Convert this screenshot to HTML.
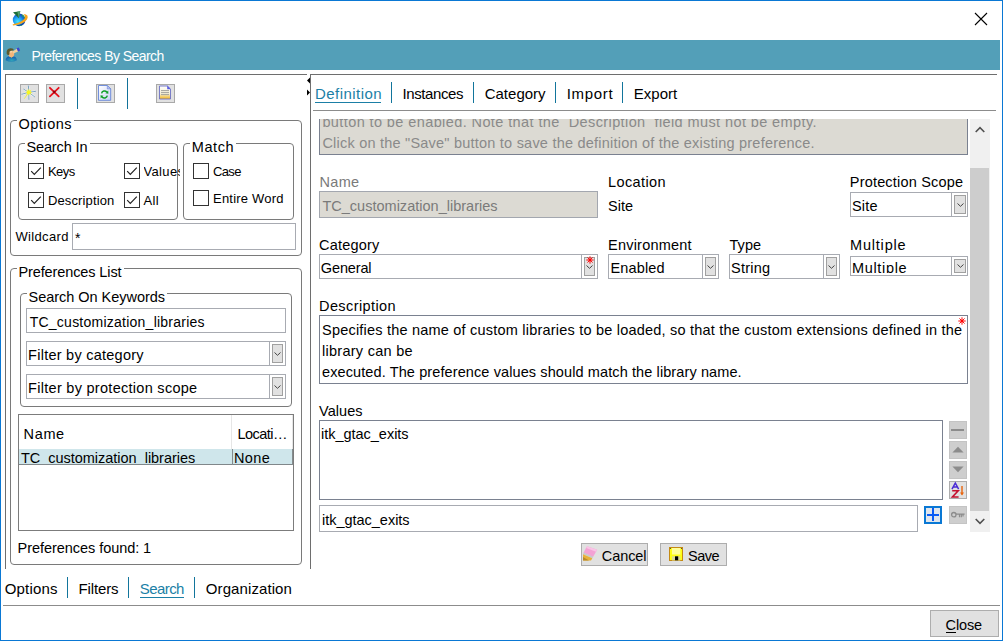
<!DOCTYPE html>
<html lang="en"><head><meta charset="utf-8"><title>Options</title>
<style>
html,body{margin:0;padding:0}
body{width:1003px;height:641px;overflow:hidden;position:relative;background:#fff;font-family:"Liberation Sans",sans-serif}
.b{position:absolute;box-sizing:border-box}
.t{position:absolute;white-space:pre;line-height:normal;font-family:"Liberation Sans",sans-serif}
.clip{position:absolute;overflow:hidden}
.fs{border:1px solid #7a7a7a;border-radius:4px}
.in{border:1px solid #a8abb2;background:#fff}
.cb{border:1px solid #333;background:#fff}
.ab{border:1px solid #a0a0a0;background:#e1e1e1}
.btn{border:1px solid #adadad;background:#e1e1e1}
.tb{border:1px solid #a9a9a9;background:#e1e1e1}
svg{position:absolute;overflow:visible}

</style></head>
<body>
<div class="b " style="left:0px;top:0px;width:1003px;height:641px;border:1px solid #0a78d4"></div>
<div class="b " style="left:3px;top:40px;width:997px;height:30px;background:#539fb8"></div>
<div class="b " style="left:5px;top:74px;width:302px;height:1px;background:#6e6e6e"></div>
<div class="b " style="left:5px;top:74px;width:1px;height:495px;background:#6e6e6e"></div>
<div class="b " style="left:310px;top:74px;width:1px;height:495px;background:#6e6e6e"></div>
<div class="b " style="left:310px;top:74px;width:687px;height:1px;background:#6e6e6e"></div>
<div class="b tb" style="left:20px;top:84px;width:19px;height:19px;"></div>
<div class="b tb" style="left:46px;top:84px;width:19px;height:19px;"></div>
<div class="b tb" style="left:96px;top:84px;width:19px;height:19px;"></div>
<div class="b tb" style="left:156px;top:84px;width:19px;height:19px;"></div>
<div class="b " style="left:77px;top:78px;width:1px;height:31px;background:#12729a"></div>
<div class="b " style="left:127px;top:78px;width:1px;height:31px;background:#12729a"></div>
<div class="b fs" style="left:10px;top:120px;width:292px;height:136px;"></div>
<div class="b " style="left:17px;top:118px;width:57px;height:5px;background:#fff"></div>
<div class="b fs" style="left:18px;top:143px;width:160px;height:77px;"></div>
<div class="b " style="left:25px;top:141px;width:65px;height:5px;background:#fff"></div>
<div class="b fs" style="left:183px;top:143px;width:111px;height:77px;"></div>
<div class="b " style="left:190px;top:141px;width:46px;height:5px;background:#fff"></div>
<div class="b fs" style="left:10px;top:268px;width:292px;height:297px;"></div>
<div class="b " style="left:17px;top:266px;width:107px;height:5px;background:#fff"></div>
<div class="b fs" style="left:20px;top:293px;width:272px;height:114px;"></div>
<div class="b " style="left:27px;top:291px;width:140px;height:5px;background:#fff"></div>
<div class="b cb" style="left:28px;top:163px;width:16px;height:16px;"></div>
<svg style="left:28px;top:163px" width="16" height="16" viewBox="0 0 16 16"><path d="M3.2 8.2 L6.3 11.3 L12.8 4.6" fill="none" stroke="#222" stroke-width="1.2"/></svg>
<div class="b cb" style="left:124px;top:163px;width:16px;height:16px;"></div>
<svg style="left:124px;top:163px" width="16" height="16" viewBox="0 0 16 16"><path d="M3.2 8.2 L6.3 11.3 L12.8 4.6" fill="none" stroke="#222" stroke-width="1.2"/></svg>
<div class="b cb" style="left:28px;top:192px;width:16px;height:16px;"></div>
<svg style="left:28px;top:192px" width="16" height="16" viewBox="0 0 16 16"><path d="M3.2 8.2 L6.3 11.3 L12.8 4.6" fill="none" stroke="#222" stroke-width="1.2"/></svg>
<div class="b cb" style="left:124px;top:192px;width:16px;height:16px;"></div>
<svg style="left:124px;top:192px" width="16" height="16" viewBox="0 0 16 16"><path d="M3.2 8.2 L6.3 11.3 L12.8 4.6" fill="none" stroke="#222" stroke-width="1.2"/></svg>
<div class="b cb" style="left:193px;top:163px;width:16px;height:16px;"></div>
<div class="b cb" style="left:193px;top:190px;width:16px;height:16px;"></div>
<div class="b in" style="left:72px;top:223px;width:224px;height:27px;"></div>
<div class="b in" style="left:26px;top:308px;width:260px;height:25px;"></div>
<div class="b in" style="left:26px;top:341px;width:260px;height:25px;"></div>
<div class="b " style="left:269px;top:341px;width:1px;height:25px;background:#a8abb2"></div>
<div class="b ab" style="left:272px;top:344px;width:11px;height:19px;"></div>
<svg style="left:274.0px;top:351.8px" width="7" height="4" viewBox="0 0 7 4"><path d="M0.5 0.5 L3.5 3.3 L6.5 0.5" fill="none" stroke="#444" stroke-width="1"/></svg>
<div class="b in" style="left:26px;top:374px;width:260px;height:25px;"></div>
<div class="b " style="left:269px;top:374px;width:1px;height:25px;background:#a8abb2"></div>
<div class="b ab" style="left:272px;top:377px;width:11px;height:19px;"></div>
<svg style="left:274.0px;top:384.8px" width="7" height="4" viewBox="0 0 7 4"><path d="M0.5 0.5 L3.5 3.3 L6.5 0.5" fill="none" stroke="#444" stroke-width="1"/></svg>
<div class="b " style="left:18px;top:414px;width:276px;height:117px;border:1px solid #7c7c7c;background:#fff"></div>
<div class="b " style="left:231px;top:415px;width:1px;height:34px;background:#e6e6e6"></div>
<div class="b " style="left:292px;top:415px;width:1px;height:34px;background:#e6e6e6"></div>
<div class="b " style="left:19px;top:449px;width:274px;height:15px;background:#cfe6eb"></div>
<div class="b " style="left:19px;top:464px;width:274px;height:1px;background:#80878a"></div>
<div class="b " style="left:232px;top:449px;width:1px;height:16px;background:#858c8e"></div>
<div class="b " style="left:292px;top:449px;width:1px;height:16px;background:#858c8e"></div>
<div class="b " style="left:67px;top:577px;width:1px;height:21px;background:#12759c"></div>
<div class="b " style="left:128px;top:577px;width:1px;height:21px;background:#12759c"></div>
<div class="b " style="left:194px;top:577px;width:1px;height:21px;background:#12759c"></div>
<div class="b " style="left:140px;top:597px;width:44px;height:1px;background:#1b7fa6"></div>
<div class="b " style="left:3px;top:605px;width:997px;height:1px;background:#8c8c8c"></div>
<div class="b btn" style="left:930px;top:610px;width:69px;height:27px;"></div>
<div class="b " style="left:946px;top:632px;width:10px;height:1px;background:#000"></div>
<div class="b " style="left:391px;top:82px;width:1px;height:21px;background:#12759c"></div>
<div class="b " style="left:473px;top:82px;width:1px;height:21px;background:#12759c"></div>
<div class="b " style="left:555px;top:82px;width:1px;height:21px;background:#12759c"></div>
<div class="b " style="left:622px;top:82px;width:1px;height:21px;background:#12759c"></div>
<div class="b " style="left:315px;top:102px;width:66px;height:1px;background:#1b7fa6"></div>
<div class="b " style="left:313px;top:110px;width:683px;height:1px;background:#8c8c8c"></div>
<div class="b " style="left:319px;top:119px;width:649px;height:36px;background:#dcdad3;border:1px solid #7a8190;border-top:none"></div>
<div class="b " style="left:970px;top:119px;width:20px;height:413px;background:#f0f0f0"></div>
<div class="b " style="left:970px;top:168px;width:19px;height:343px;background:#cdcdcd"></div>
<svg style="left:975px;top:126px" width="10" height="7" viewBox="0 0 10 7"><path d="M0.7 6 L5 1.7 L9.3 6" fill="none" stroke="#505050" stroke-width="1.6"/></svg>
<svg style="left:975px;top:518px" width="10" height="7" viewBox="0 0 10 7"><path d="M0.7 1 L5 5.3 L9.3 1" fill="none" stroke="#505050" stroke-width="1.6"/></svg>
<div class="b " style="left:319px;top:191px;width:279px;height:27px;background:#dcdad3;border:1px solid #a3a7af"></div>
<div class="b in" style="left:850px;top:192px;width:118px;height:25px;"></div>
<div class="b " style="left:951px;top:192px;width:1px;height:25px;background:#a8abb2"></div>
<div class="b ab" style="left:954px;top:195px;width:12px;height:19px;"></div>
<svg style="left:956.5px;top:202.8px" width="7" height="4" viewBox="0 0 7 4"><path d="M0.5 0.5 L3.5 3.3 L6.5 0.5" fill="none" stroke="#444" stroke-width="1"/></svg>
<div class="b in" style="left:319px;top:254px;width:279px;height:25px;"></div>
<div class="b " style="left:581px;top:254px;width:1px;height:25px;background:#a8abb2"></div>
<div class="b ab" style="left:584px;top:257px;width:11px;height:19px;"></div>
<svg style="left:586.0px;top:264.8px" width="7" height="4" viewBox="0 0 7 4"><path d="M0.5 0.5 L3.5 3.3 L6.5 0.5" fill="none" stroke="#444" stroke-width="1"/></svg>
<div class="b in" style="left:608px;top:254px;width:111px;height:25px;"></div>
<div class="b " style="left:702px;top:254px;width:1px;height:25px;background:#a8abb2"></div>
<div class="b ab" style="left:705px;top:257px;width:11px;height:19px;"></div>
<svg style="left:707.0px;top:264.8px" width="7" height="4" viewBox="0 0 7 4"><path d="M0.5 0.5 L3.5 3.3 L6.5 0.5" fill="none" stroke="#444" stroke-width="1"/></svg>
<div class="b in" style="left:729px;top:254px;width:111px;height:25px;"></div>
<div class="b " style="left:823px;top:254px;width:1px;height:25px;background:#a8abb2"></div>
<div class="b ab" style="left:826px;top:257px;width:11px;height:19px;"></div>
<svg style="left:828.0px;top:264.8px" width="7" height="4" viewBox="0 0 7 4"><path d="M0.5 0.5 L3.5 3.3 L6.5 0.5" fill="none" stroke="#444" stroke-width="1"/></svg>
<div class="b in" style="left:850px;top:256px;width:118px;height:20px;"></div>
<div class="b " style="left:951px;top:256px;width:1px;height:20px;background:#a8abb2"></div>
<div class="b ab" style="left:954px;top:259px;width:12px;height:14px;"></div>
<svg style="left:956.5px;top:264.3px" width="7" height="4" viewBox="0 0 7 4"><path d="M0.5 0.5 L3.5 3.3 L6.5 0.5" fill="none" stroke="#444" stroke-width="1"/></svg>
<div class="b " style="left:319px;top:315px;width:649px;height:69px;border:1px solid #7a8190;background:#fff"></div>
<div class="b " style="left:319px;top:420px;width:624px;height:80px;border:1px solid #7a8190;background:#fff"></div>
<div class="b " style="left:949px;top:421px;width:18px;height:18px;background:#cecece;border:1px solid #c4c4c4"></div>
<div class="b " style="left:949px;top:441px;width:18px;height:18px;background:#cecece;border:1px solid #c4c4c4"></div>
<div class="b " style="left:949px;top:461px;width:18px;height:18px;background:#cecece;border:1px solid #c4c4c4"></div>
<div class="b btn" style="left:949px;top:481px;width:18px;height:18px;"></div>
<div class="b in" style="left:319px;top:505px;width:599px;height:27px;"></div>
<div class="b " style="left:924px;top:506px;width:18px;height:18px;border:2px solid #0a78d4;background:#e1e6ec"></div>
<div class="b " style="left:949px;top:506px;width:18px;height:18px;background:#cecece;border:1px solid #c4c4c4"></div>
<div class="b btn" style="left:581px;top:543px;width:67px;height:23px;"></div>
<div class="b btn" style="left:660px;top:543px;width:67px;height:23px;"></div>
<svg style="left:306px;top:75px" width="5" height="22" viewBox="0 0 5 22"><path d="M4 2.5 L4 8.5 L1 5.5 Z M1 14.5 L1 20.5 L4 17.5 Z" fill="#000"/></svg>
<svg style="left:975px;top:13px" width="12" height="12" viewBox="0 0 12 12"><path d="M0 0 L12 12 M12 0 L0 12" stroke="#000" stroke-width="1.1"/></svg>
<div class="b" style="left:951px;top:429px;width:13px;height:2px;background:#8c8c8c"></div>
<svg style="left:949px;top:441px" width="18" height="18" viewBox="0 0 18 18"><path d="M9 5.7 L14.6 11.4 L3.4 11.4 Z" fill="#8c8c8c"/></svg>
<svg style="left:949px;top:461px" width="18" height="18" viewBox="0 0 18 18"><path d="M9 11.2 L14.6 5.5 L3.4 5.5 Z" fill="#8c8c8c"/></svg>
<svg style="left:949px;top:481px" width="18" height="18" viewBox="0 0 18 18"><path d="M3 8.2 L6.3 2 L9.6 8.2 M4.3 6 L8.3 6" fill="none" stroke="#4a2bd6" stroke-width="1.5"/><path d="M3.2 9.7 L9.2 9.7 L3.4 16 L9.6 16" fill="none" stroke="#c4122f" stroke-width="1.6"/><path d="M13 5 L13 13.5" stroke="#e8640c" stroke-width="1.4"/><path d="M11 11.5 L13 14.5 L15 11.5 Z" fill="#e8640c"/></svg>
<div class="b" style="left:927px;top:514px;width:12px;height:2px;background:#0a5cf5"></div>
<div class="b" style="left:932px;top:508px;width:2px;height:13px;background:#0a5cf5"></div>
<svg style="left:949px;top:506px" width="18" height="18" viewBox="0 0 18 18"><circle cx="4.8" cy="8.7" r="2.2" fill="none" stroke="#8c8c8c" stroke-width="1.3"/><path d="M7 8.2 L15.6 8.2 M10.5 8.5 L10.5 11.2 M12.3 8.5 L12.3 11.2 M14 8.5 L14 10.4" fill="none" stroke="#8c8c8c" stroke-width="1.2"/></svg>
<svg style="left:586.4px;top:256.3px" width="8" height="8" viewBox="-4 -4 8 8"><g stroke="#f00" stroke-width="0.95" stroke-linecap="round"><path d="M0 -3.3 L0 3.3 M-3.3 0 L3.3 0 M-2.3 -2.3 L2.3 2.3 M-2.3 2.3 L2.3 -2.3"/></g><circle r="1.35" fill="#f00"/></svg>
<svg style="left:957.7px;top:316.7px" width="8" height="8" viewBox="-4 -4 8 8"><g stroke="#f00" stroke-width="0.95" stroke-linecap="round"><path d="M0 -3.3 L0 3.3 M-3.3 0 L3.3 0 M-2.3 -2.3 L2.3 2.3 M-2.3 2.3 L2.3 -2.3"/></g><circle r="1.35" fill="#f00"/></svg>
<svg style="left:10px;top:8px" width="20" height="22" viewBox="10 8 20 22"><defs><radialGradient id="gl" cx="0.4" cy="0.62" r="0.62"><stop offset="0" stop-color="#46e4ff"/><stop offset="0.5" stop-color="#1fa2f2"/><stop offset="1" stop-color="#1140c0"/></radialGradient></defs><circle cx="19.1" cy="19.9" r="6.3" fill="url(#gl)"/><path d="M21.3 14.3 Q24.6 15 25.2 18.8 Q23 17.6 21.8 15.6 Z" fill="#2aa05a"/><path d="M16.5 25.4 Q20.5 27 24.3 23.6 Q24.8 21.5 25.3 20.5 Q23 24.5 16.5 25.4 Z" fill="#17459c"/><path d="M18.5 25.8 Q21 26 22.6 24.9 Q20.5 24.8 18.5 25.8 Z" fill="#2aa05a"/><path d="M23.3 13.9 Q29.6 14.3 27 19.4 Q23 24.6 13.2 25.4 Q11.6 24.6 14 24 Q21.8 22.6 24.6 18.6 Q25.8 16 23.3 13.9 Z" fill="#f7a51a"/><path d="M13 12.2 L20.3 11.2 L18.8 18.3 Z" fill="#1d6d38"/><path d="M17.3 11.6 L20.3 11.2 L18.8 18.3 Z" fill="#4f9d6c"/></svg>
<svg style="left:4px;top:44px" width="20" height="20" viewBox="4 44 20 20"><defs><radialGradient id="bd" cx="0.55" cy="0.75" r="0.6"><stop offset="0" stop-color="#2fa3b8"/><stop offset="1" stop-color="#1766b4"/></radialGradient></defs><path d="M5.6 60.2 Q5.8 56.6 9 56.2 L13.4 56.2 Q16.6 56.8 16.9 60.2 Q11.2 63.2 5.6 60.2 Z" fill="url(#bd)"/><path d="M10.2 56 L12.6 56 L11.5 58 Z" fill="#e8c040"/><ellipse cx="11.3" cy="53.7" rx="2.9" ry="3.5" fill="#f4b57a"/><path d="M6.7 53.7 Q6 48.5 10.5 48.2 Q13.8 48.1 13.7 50.3 L10.6 50.7 Q9.2 52 9.3 54.8 Q7.3 55.2 6.7 53.7 Z" fill="#5c592c"/><path d="M9.6 51.6 L12 51.3 L12 52.2 L9.6 52.4 Z" fill="#fbe3c0"/><path d="M12.4 51.4 L17 48.7 L18.2 51.4 L13.4 53.6 Z" fill="#f1cf9c"/><path d="M16.6 48.3 L18.8 47.4 L20.1 50.4 L18 51.6 Z" fill="#3a44d0"/></svg>
<svg style="left:20px;top:84px" width="19" height="19" viewBox="20 84 19 19"><g stroke="#fff" stroke-width="1.6" stroke-linecap="round"><path d="M28.8 92.3 L28.5 87 M28.8 92.3 L34.4 91.6 M28.8 92.3 L33.6 96 M28.8 92.3 L28.9 98.2 M28.8 92.3 L23 93.9 M28.8 92.3 L24.6 89.8"/></g><g stroke="#6a97bb" stroke-width="0.9" stroke-linecap="round"><path d="M28.8 92.3 L28.4 86 M28.8 92.3 L35.4 91.4 M28.8 92.3 L34.5 96.7 M28.8 92.3 L28.9 99.2 M28.8 92.3 L21.9 94.2 M28.8 92.3 L23.9 89.3"/></g><path d="M28.8 92.3 L24.3 98.7" stroke="#eeee50" stroke-width="1"/><path d="M28.80 88.60 L29.45 90.73 L31.42 89.68 L30.37 91.65 L32.50 92.30 L30.37 92.95 L31.42 94.92 L29.45 93.87 L28.80 96.00 L28.15 93.87 L26.18 94.92 L27.23 92.95 L25.10 92.30 L27.23 91.65 L26.18 89.68 L28.15 90.73 Z" fill="#f8f820"/></svg>
<svg style="left:46px;top:84px" width="19" height="19" viewBox="46 84 19 19"><path d="M49.9 87.8 L58.7 96.3 M58.7 87.8 L49.9 96.3" stroke="#e6101c" stroke-width="1.8" stroke-linecap="round"/><path d="M53.3 91 L55.3 93 M55.3 91 L53.3 93" stroke="#8a0008" stroke-width="1.4"/></svg>
<svg style="left:96px;top:84px" width="19" height="19" viewBox="96 84 19 19"><defs><linearGradient id="dg" x1="0" y1="0" x2="1" y2="1"><stop offset="0" stop-color="#fff"/><stop offset="1" stop-color="#c9d3f7"/></linearGradient></defs><path d="M98.5 85.5 L107.3 85.5 L110.7 88.9 L110.7 100.3 L98.5 100.3 Z" fill="url(#dg)" stroke="#6485d8" stroke-width="0.9"/><path d="M107.3 85.5 L107.3 88.9 L110.7 88.9 Z" fill="#c4c4f0" stroke="#6485d8" stroke-width="0.6"/><path d="M101.6 93.4 A3 3 0 0 1 106.8 92" fill="none" stroke="#0f9f28" stroke-width="1.5"/><path d="M105.4 93.2 L108.4 93.8 L108.2 90.6 Z" fill="#0f9f28"/><path d="M107.3 95.6 A3 3 0 0 1 102.1 97" fill="none" stroke="#0f9f28" stroke-width="1.5"/><path d="M103.5 95.8 L100.5 95.2 L100.7 98.4 Z" fill="#0f9f28"/></svg>
<svg style="left:156px;top:84px" width="19" height="19" viewBox="156 84 19 19"><defs><linearGradient id="yg" x1="0" y1="0" x2="0" y2="1"><stop offset="0" stop-color="#fff"/><stop offset="0.6" stop-color="#f5efd4"/><stop offset="1" stop-color="#f2b418"/></linearGradient></defs><path d="M159.5 86 L167.4 86 L170.5 89.1 L170.5 99 L159.5 99 Z" fill="url(#yg)" stroke="#6c70c6" stroke-width="0.9"/><path d="M167.2 85.6 L167.2 89.3 L170.9 89.3 Z" fill="#5c60e0"/><path d="M161 90.6 L169 90.6 M161 92.6 L169 92.6 M161 94.6 L169 94.6" stroke="#a3a39b" stroke-width="1"/></svg>
<svg style="left:582px;top:545px" width="17" height="17" viewBox="582 545 17 17"><path d="M587 546.3 L597.2 549.8 L593 557 L583.5 552.8 Z" fill="#f3a2d4"/><path d="M587 546.3 L597.2 549.8 L596 551.8 L586.3 548 Z" fill="#f9c4e6"/><path d="M583.6 552.6 L593.2 556.8 L592.3 558.3 L583 554.2 Z" fill="#c9c9c9"/><path d="M583 554.2 L592.3 558.3 L591 560.5 L583 560.4 Z" fill="#e8b13a"/><path d="M583 557 L589 560.4 L583 560.4 Z" fill="#b8892a"/></svg>
<svg style="left:669px;top:547px" width="14" height="14" viewBox="669 547 14 14"><rect x="669.5" y="547.5" width="13" height="13" fill="#ffff14" stroke="#c48a14" stroke-width="1"/><rect x="672" y="548" width="8.3" height="6.5" fill="#ffff9a"/><rect x="672" y="556.3" width="8.3" height="4.2" fill="#dcdc96"/><rect x="675" y="556.3" width="3.2" height="4" fill="#000"/><rect x="670" y="548" width="1" height="1" fill="#554"/><rect x="681" y="548" width="1" height="1" fill="#554"/></svg>
<span class="t" style="left:34.4px;top:11.00px;font-size:16px;color:#000;letter-spacing:-0.323px;">Options</span>
<span class="t" style="left:31.4px;top:48.00px;font-size:14px;color:#fff;letter-spacing:-0.553px;">Preferences By Search</span>
<span class="t" style="left:18.4px;top:116.00px;font-size:14.5px;color:#000;letter-spacing:0.536px;">Options</span>
<span class="t" style="left:26.4px;top:139.00px;font-size:14.5px;color:#000;letter-spacing:-0.110px;">Search In</span>
<span class="t" style="left:47.9px;top:164.00px;font-size:13px;color:#000;letter-spacing:-0.535px;">Keys</span>
<div class="clip" style="left:144px;top:160px;width:36px;height:22px"><span class="t" style="left:-0.6px;top:4.00px;font-size:13px;color:#000;letter-spacing:0.381px;">Values</span></div>
<span class="t" style="left:47.9px;top:193.00px;font-size:13px;color:#000;letter-spacing:0.137px;">Description</span>
<span class="t" style="left:143.4px;top:193.00px;font-size:13px;color:#000;letter-spacing:0.373px;">All</span>
<span class="t" style="left:191.8px;top:139.00px;font-size:14.5px;color:#000;letter-spacing:0.575px;">Match</span>
<span class="t" style="left:213.0px;top:164.00px;font-size:13px;color:#000;letter-spacing:-0.653px;">Case</span>
<span class="t" style="left:213.0px;top:191.00px;font-size:13px;color:#000;letter-spacing:0.219px;">Entire Word</span>
<span class="t" style="left:15.4px;top:229.00px;font-size:13px;color:#000;letter-spacing:0.346px;">Wildcard</span>
<span class="t" style="left:74.9px;top:230.00px;font-size:14px;color:#000;letter-spacing:0.000px;">*</span>
<span class="t" style="left:18.4px;top:264.00px;font-size:14.5px;color:#000;letter-spacing:-0.105px;">Preferences List</span>
<span class="t" style="left:28.6px;top:289.00px;font-size:14.5px;color:#000;letter-spacing:-0.036px;">Search On Keywords</span>
<span class="t" style="left:29.7px;top:314.00px;font-size:14px;color:#000;letter-spacing:0.242px;">TC_customization_libraries</span>
<span class="t" style="left:28.1px;top:347.00px;font-size:14.5px;color:#000;letter-spacing:0.252px;">Filter by category</span>
<span class="t" style="left:28.1px;top:380.00px;font-size:14.5px;color:#000;letter-spacing:0.284px;">Filter by protection scope</span>
<span class="t" style="left:23.6px;top:426.00px;font-size:14.5px;color:#000;letter-spacing:0.638px;">Name</span>
<span class="t" style="left:237.6px;top:426.00px;font-size:14.5px;color:#000;letter-spacing:-0.567px;">Locati…</span>
<div class="clip" style="left:19px;top:449px;width:213px;height:15px"><span class="t" style="left:1.9px;top:1.00px;font-size:14.5px;color:#000;letter-spacing:-0.019px;">TC_customization_libraries</span></div>
<div class="clip" style="left:233px;top:449px;width:59px;height:15px"><span class="t" style="left:0.9px;top:1.00px;font-size:14.5px;color:#000;letter-spacing:0.443px;">None</span></div>
<span class="t" style="left:17.6px;top:540.00px;font-size:14.5px;color:#000;letter-spacing:-0.054px;">Preferences found: 1</span>
<span class="t" style="left:4.8px;top:580.00px;font-size:15px;color:#000;letter-spacing:0.149px;">Options</span>
<span class="t" style="left:78.4px;top:580.00px;font-size:15px;color:#000;letter-spacing:-0.107px;">Filters</span>
<span class="t" style="left:139.8px;top:580.00px;font-size:15px;color:#1b7fa6;letter-spacing:-0.586px;">Search</span>
<span class="t" style="left:205.8px;top:580.00px;font-size:15px;color:#000;letter-spacing:0.094px;">Organization</span>
<span class="t" style="left:315.0px;top:85.00px;font-size:15px;color:#1b7fa6;letter-spacing:0.450px;">Definition</span>
<span class="t" style="left:402.4px;top:85.00px;font-size:15px;color:#000;letter-spacing:-0.377px;">Instances</span>
<span class="t" style="left:484.7px;top:85.00px;font-size:15px;color:#000;letter-spacing:0.004px;">Category</span>
<span class="t" style="left:566.7px;top:85.00px;font-size:15px;color:#000;letter-spacing:0.677px;">Import</span>
<span class="t" style="left:633.7px;top:85.00px;font-size:15px;color:#000;letter-spacing:0.048px;">Export</span>
<div class="clip" style="left:320px;top:119px;width:647px;height:35px"><span class="t" style="left:2.4px;top:-5.00px;font-size:14.5px;color:#8a8a8a;letter-spacing:0.402px;">button to be enabled. Note that the  Description  field must not be empty.</span></div>
<span class="t" style="left:322.4px;top:135.00px;font-size:14.5px;color:#8a8a8a;letter-spacing:0.221px;">Click on the "Save" button to save the definition of the existing preference.</span>
<span class="t" style="left:319.4px;top:174.00px;font-size:14.5px;color:#7a7a7a;letter-spacing:0.371px;">Name</span>
<span class="t" style="left:322.4px;top:198.00px;font-size:14.5px;color:#7a7a7a;letter-spacing:0.013px;">TC_customization_libraries</span>
<span class="t" style="left:608.0px;top:174.00px;font-size:14.5px;color:#000;letter-spacing:0.396px;">Location</span>
<span class="t" style="left:608.0px;top:198.00px;font-size:14.5px;color:#000;letter-spacing:0.067px;">Site</span>
<span class="t" style="left:849.8px;top:174.00px;font-size:14.5px;color:#000;letter-spacing:0.184px;">Protection Scope</span>
<span class="t" style="left:852.0px;top:198.00px;font-size:14.5px;color:#000;letter-spacing:0.200px;">Site</span>
<span class="t" style="left:319.0px;top:237.00px;font-size:14.5px;color:#000;letter-spacing:0.194px;">Category</span>
<span class="t" style="left:320.8px;top:260.00px;font-size:14.5px;color:#000;letter-spacing:-0.132px;">General</span>
<span class="t" style="left:608.0px;top:237.00px;font-size:14.5px;color:#000;letter-spacing:0.219px;">Environment</span>
<span class="t" style="left:610.4px;top:260.00px;font-size:14.5px;color:#000;letter-spacing:0.164px;">Enabled</span>
<span class="t" style="left:729.4px;top:237.00px;font-size:14.5px;color:#000;letter-spacing:0.121px;">Type</span>
<span class="t" style="left:731.0px;top:260.00px;font-size:14.5px;color:#000;letter-spacing:0.222px;">String</span>
<span class="t" style="left:850.0px;top:237.00px;font-size:14.5px;color:#000;letter-spacing:0.804px;">Multiple</span>
<div class="clip" style="left:851px;top:257px;width:100px;height:16.399999999999977px"><span class="t" style="left:1.0px;top:3.00px;font-size:14.5px;color:#000;letter-spacing:0.662px;">Multiple</span></div>
<span class="t" style="left:319.0px;top:298.00px;font-size:14.5px;color:#000;letter-spacing:0.407px;">Description</span>
<span class="t" style="left:322.0px;top:322.00px;font-size:14.5px;color:#000;letter-spacing:0.210px;">Specifies the name of custom libraries to be loaded, so that the custom extensions defined in the</span>
<span class="t" style="left:322.0px;top:343.00px;font-size:14.5px;color:#000;letter-spacing:0.273px;">library can be</span>
<span class="t" style="left:322.0px;top:364.00px;font-size:14.5px;color:#000;letter-spacing:0.105px;">executed. The preference values should match the library name.</span>
<span class="t" style="left:319.0px;top:403.00px;font-size:14.5px;color:#000;letter-spacing:0.067px;">Values</span>
<span class="t" style="left:321.0px;top:426.00px;font-size:14.5px;color:#000;letter-spacing:-0.020px;">itk_gtac_exits</span>
<span class="t" style="left:322.0px;top:512.00px;font-size:14.5px;color:#000;letter-spacing:-0.020px;">itk_gtac_exits</span>
<span class="t" style="left:601.8px;top:548.00px;font-size:14.5px;color:#000;letter-spacing:-0.068px;">Cancel</span>
<span class="t" style="left:688.0px;top:548.00px;font-size:14.5px;color:#000;letter-spacing:-0.488px;">Save</span>
<span class="t" style="left:945.6px;top:617.00px;font-size:14.5px;color:#000;letter-spacing:-0.120px;">Close</span>
</body></html>
